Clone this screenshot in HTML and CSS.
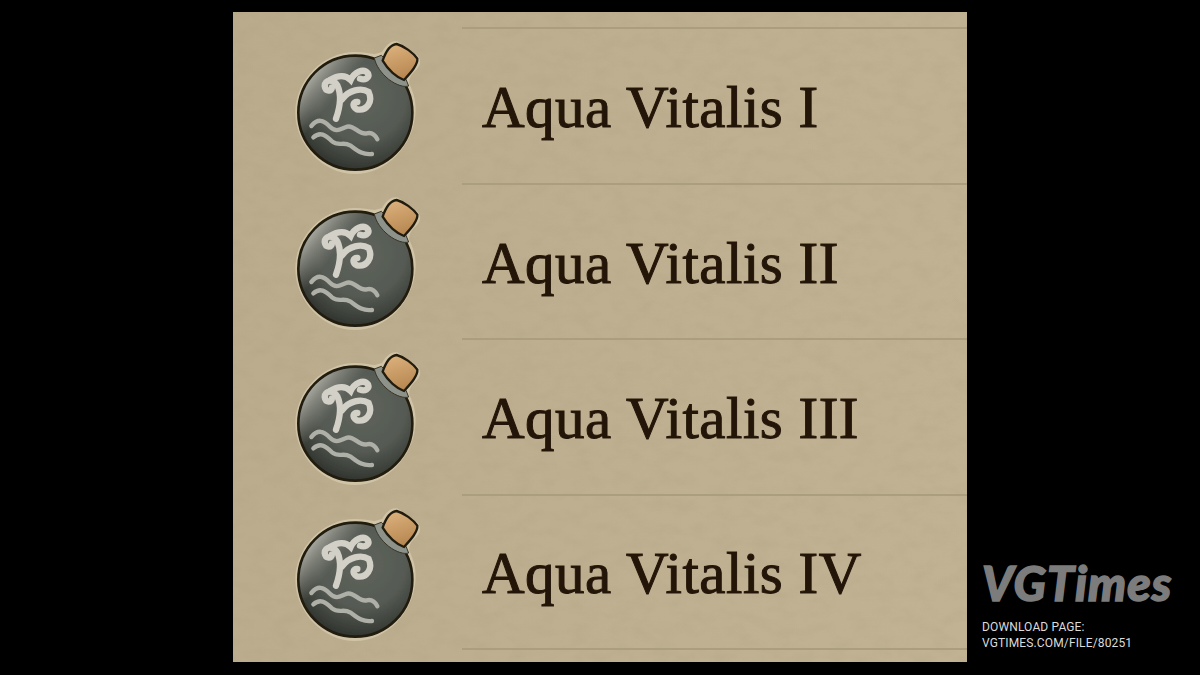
FILE: index.html
```html
<!DOCTYPE html>
<html lang="en">
  <head>
    <meta charset="UTF-8" />
    <meta name="viewport" content="width=device-width, initial-scale=1" />
    <title>Aqua Vitalis</title>
    <link rel="stylesheet" href="styles.css">
  </head>
  <body>
    <svg class="defs" width="0" height="0" aria-hidden="true">
      <defs>
        <radialGradient id="glass" cx="0.56" cy="0.36" r="0.7">
          <stop offset="0" stop-color="#5f645c" />
          <stop offset="0.55" stop-color="#555a53" />
          <stop offset="0.85" stop-color="#383c36" />
          <stop offset="1" stop-color="#292b26" />
        </radialGradient>
        <linearGradient id="rim" x1="0" y1="0.3" x2="0.5" y2="0.7">
          <stop offset="0" stop-color="#b0b0a6" stop-opacity="0.95" />
          <stop offset="0.45" stop-color="#8c8d85" stop-opacity="0" />
        </linearGradient>
        <linearGradient id="cork" x1="0.3" y1="0" x2="0.6" y2="1">
          <stop offset="0" stop-color="#dcb17c" />
          <stop offset="1" stop-color="#b5854f" />
        </linearGradient>
        <filter id="soft"><feGaussianBlur stdDeviation="1.8" /></filter>
        <filter id="paper" x="0" y="0" width="100%" height="100%">
          <feTurbulence type="fractalNoise" baseFrequency="0.05 0.08" numOctaves="5" seed="7" />
          <feColorMatrix values="0 0 0 0 0.36  0 0 0 0 0.30  0 0 0 0 0.18  1.2 0 0 0 -0.5" />
        </filter>
        <symbol id="flask" viewBox="0 0 480 450">
          <g filter="url(#soft)">
            <path class="halo" d="M225 66C250 66 268 70 284 72L306 66C316 46 335 30 352 34L412 76C426 92 422 110 404 124C394 134 386 146 388 162C402 190 410 220 406 255C398 348 320 432 225 432C130 432 46 345 46 248C46 150 130 66 225 66Z" />
            <circle class="body" cx="226" cy="248" r="171" />
            <circle class="body-rim" cx="226" cy="248" r="167" />
            <path class="neck" d="M283 84L304 76L378 148L386 168C372 172 350 166 326 148C304 130 288 108 283 84Z" />
            <path class="cork" d="M308 92C316 68 330 44 350 42C372 48 400 68 412 86C414 104 392 128 372 150C350 142 324 120 308 92Z" />
            <path class="rune" d="M168 266C180 232 186 196 172 166C160 146 134 148 134 168C136 186 156 186 156 172" />
            <path class="rune" d="M150 150C176 134 198 136 212 150C222 128 250 112 264 130C270 144 254 152 240 146" />
            <path class="rune" d="M186 208C206 180 244 172 266 186C280 216 260 244 230 238C216 230 218 214 232 216" />
            <path class="wave" d="M94 288C114 264 130 270 150 290C170 310 182 296 202 290C222 284 238 316 260 310C276 306 286 316 292 328" />
            <path class="wave" d="M100 322C120 304 136 314 156 334C176 350 190 334 210 346C230 360 246 376 276 372" />
          </g>
        </symbol>
      </defs>
    </svg>

    <main class="sheet">
      <svg class="grain" width="734" height="650" aria-hidden="true">
        <rect width="734" height="650" filter="url(#paper)" />
      </svg>
      <ul class="potions">
        <li class="potion">
          <svg class="flask"><use href="#flask" /></svg>
          <div class="potion-name">Aqua Vitalis I</div>
        </li>
        <li class="potion">
          <svg class="flask"><use href="#flask" /></svg>
          <div class="potion-name">Aqua Vitalis II</div>
        </li>
        <li class="potion">
          <svg class="flask"><use href="#flask" /></svg>
          <div class="potion-name">Aqua Vitalis III</div>
        </li>
        <li class="potion">
          <svg class="flask"><use href="#flask" /></svg>
          <div class="potion-name">Aqua Vitalis IV</div>
        </li>
      </ul>
    </main>

    <aside class="credit">
      <div class="credit-logo">VGTimes</div>
      <div class="credit-text">DOWNLOAD PAGE:<br />VGTIMES.COM/FILE/80251</div>
    </aside>
  </body>
</html>
```

FILE: styles.css
```css
* {
  box-sizing: border-box;
}
body {
  margin: 0;
  padding: 12px 0 0 233px;
  height: 675px;
  overflow: hidden;
  background: #000;
  display: flex;
  align-items: flex-start;
}
.defs {
  position: absolute;
}
.sheet {
  position: relative;
  width: 734px;
  height: 650px;
  flex-shrink: 0;
  padding-top: 15px;
  background: linear-gradient(100deg, #b9ab8c, #bdaf90 50%, #c0b293);
}
.grain {
  position: absolute;
  left: 0;
  top: 0;
  opacity: 0.25;
}
.potions {
  position: relative;
  list-style: none;
  margin: 0;
  padding: 0;
}
.potion {
  height: 155.5px;
  display: flex;
}
.flask {
  width: 160px;
  height: 150px;
  margin: 3px 22px 0 47px;
  flex-shrink: 0;
}
.potion-name {
  flex: 1;
  padding: 4px 0 0 20px;
  display: flex;
  align-items: center;
  border-top: 2px solid #ab9e7f;
  font-family: "Liberation Serif", serif;
  font-size: 59px;
  letter-spacing: 0.5px;
  color: #231508;
  -webkit-text-stroke: 1px #231508;
  filter: blur(0.6px);
}
.potion:last-child .potion-name {
  height: 156px;
  border-bottom: 2px solid #ab9e7f;
}
.halo {
  fill: #d8cdb1;
  opacity: 0.7;
}
.body {
  fill: url(#glass);
  stroke: #221c11;
  stroke-width: 8;
}
.body-rim {
  fill: url(#rim);
}
.neck {
  fill: #8d938b;
  stroke: #3a3628;
  stroke-width: 3;
}
.cork {
  fill: url(#cork);
  stroke: #221c11;
  stroke-width: 7;
}
.rune {
  fill: none;
  stroke: #d2d0c7;
  stroke-width: 19;
  stroke-linecap: round;
}
.wave {
  fill: none;
  stroke: #aeb0a8;
  stroke-width: 13;
  stroke-linecap: round;
}
.credit {
  margin: 545px 0 0 15px;
  color: #dcdcdc;
}
.credit-logo {
  font-family: "Lato", sans-serif;
  font-style: italic;
  font-weight: 900;
  font-size: 48px;
  line-height: 52px;
  letter-spacing: 1px;
  color: #7c7c7c;
  -webkit-text-stroke: 1.5px #7c7c7c;
}
.credit-text {
  margin-top: 10px;
  font-family: "Roboto", sans-serif;
  font-size: 12px;
  line-height: 16px;
  letter-spacing: 0.14px;
  white-space: nowrap;
}
```
